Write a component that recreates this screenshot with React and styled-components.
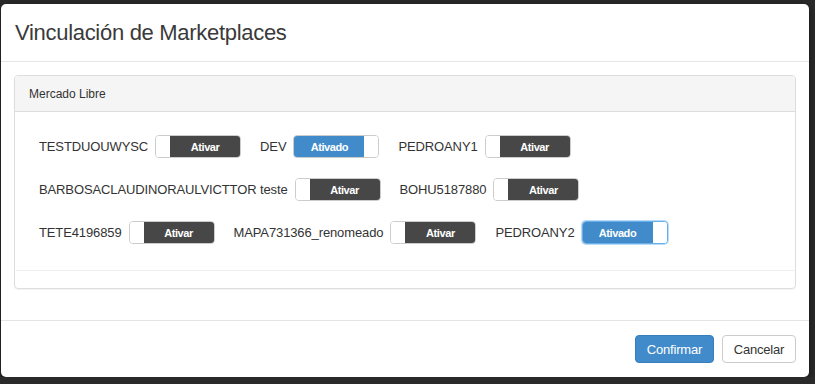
import React from "react";
import styled, { createGlobalStyle } from "styled-components";

const GlobalStyle = createGlobalStyle`
  html, body {
    margin: 0;
    padding: 0;
    background: #2a2a2a;
    font-family: "Liberation Sans", Arial, sans-serif;
    color: #333;
  }
`;

const rows = [
  [
    { name: "TESTDUOUWYSC", on: false },
    { name: "DEV", on: true },
    { name: "PEDROANY1", on: false },
  ],
  [
    { name: "BARBOSACLAUDINORAULVICTTOR teste", on: false },
    { name: "BOHU5187880", on: false },
  ],
  [
    { name: "TETE4196859", on: false },
    { name: "MAPA731366_renomeado", on: false },
    { name: "PEDROANY2", on: true, focused: true },
  ],
];

const Modal = styled.div`
  margin: 4px 0 0 1px;
  width: 808px;
  background: #fff;
  border-radius: 5px;
  box-shadow: 0 3px 9px rgba(0, 0, 0, 0.5);
`;

const Header = styled.div`
  height: 57px;
  display: flex;
  align-items: center;
  padding: 0 14px;
  border-bottom: 1px solid #e5e5e5;
`;

const Title = styled.h4`
  margin: 0;
  font-size: 22px;
  font-weight: normal;
  letter-spacing: -0.3px;
  color: #3a3a3a;
`;

const Body = styled.div`
  padding: 13px 13px 31px 13px;
`;

const Panel = styled.div`
  border: 1px solid #ddd;
  border-radius: 4px;
  box-shadow: 0 1px 1px rgba(0, 0, 0, 0.05);
`;

const PanelHeading = styled.div`
  height: 35px;
  display: flex;
  align-items: center;
  padding: 0 14px;
  background: #f5f5f5;
  border-bottom: 1px solid #ddd;
  border-radius: 3px 3px 0 0;
  font-size: 12px;
  color: #333;
`;

const PanelBody = styled.div`
  padding: 23px 0 17px 0;
`;

const Rows = styled.div`
  display: flex;
  flex-direction: column;
  gap: 20px;
  padding: 0 24px;
`;

const Row = styled.div`
  display: flex;
  align-items: center;
  gap: 19px;
`;

const Item = styled.div`
  display: flex;
  align-items: center;
  gap: 7px;
`;

const Label = styled.span`
  font-size: 13px;
  letter-spacing: -0.12px;
  color: #333;
  white-space: nowrap;
`;

const Switch = styled.div`
  display: flex;
  flex-direction: ${(p) => (p.$on ? "row" : "row-reverse")};
  width: 86px;
  height: 23px;
  box-sizing: border-box;
  border: 1px solid ${(p) => (p.$focused ? "#66afe9" : "#ccc")};
  border-radius: 4px;
  overflow: hidden;
  background: #fff;
  box-shadow: ${(p) =>
    p.$focused ? "0 0 0 1px rgba(102, 175, 233, 0.45)" : "none"};
`;

const SwitchLabel = styled.span`
  flex: 1;
  display: flex;
  align-items: center;
  justify-content: center;
  background: ${(p) => (p.$on ? "#428bca" : "#474747")};
  color: #fff;
  font-size: 11px;
  font-weight: bold;
  letter-spacing: -0.4px;
`;

const Handle = styled.span`
  width: 14px;
  background: #fff;
`;

const Divider = styled.div`
  margin: 26px 1px 0 1px;
  border-top: 1px solid #eee;
`;

const Footer = styled.div`
  display: flex;
  justify-content: flex-end;
  gap: 8px;
  padding: 14px 13px 14px 0;
  border-top: 1px solid #e5e5e5;
`;

const Button = styled.button`
  height: 28px;
  width: ${(p) => (p.$primary ? "79px" : "74px")};
  padding: 0;
  border-radius: 4px;
  font-family: "Liberation Sans", Arial, sans-serif;
  font-size: 13px;
  letter-spacing: -0.2px;
  border: 1px solid ${(p) => (p.$primary ? "#357ebd" : "#ccc")};
  background: ${(p) => (p.$primary ? "#428bca" : "#fff")};
  color: ${(p) => (p.$primary ? "#fff" : "#333")};
`;

const Toggle = ({ on, focused }) => (
  <Switch $on={on} $focused={focused}>
    <SwitchLabel $on={on}>{on ? "Ativado" : "Ativar"}</SwitchLabel>
    <Handle />
  </Switch>
);

const App = () => (
  <>
    <GlobalStyle />
    <Modal>
      <Header>
        <Title>Vinculación de Marketplaces</Title>
      </Header>
      <Body>
        <Panel>
          <PanelHeading>Mercado Libre</PanelHeading>
          <PanelBody>
            <Rows>
              {rows.map((row, i) => (
                <Row key={i}>
                  {row.map((acc) => (
                    <Item key={acc.name}>
                      <Label>{acc.name}</Label>
                      <Toggle on={acc.on} focused={acc.focused} />
                    </Item>
                  ))}
                </Row>
              ))}
            </Rows>
            <Divider />
          </PanelBody>
        </Panel>
      </Body>
      <Footer>
        <Button $primary>Confirmar</Button>
        <Button>Cancelar</Button>
      </Footer>
    </Modal>
  </>
);

export default App;
